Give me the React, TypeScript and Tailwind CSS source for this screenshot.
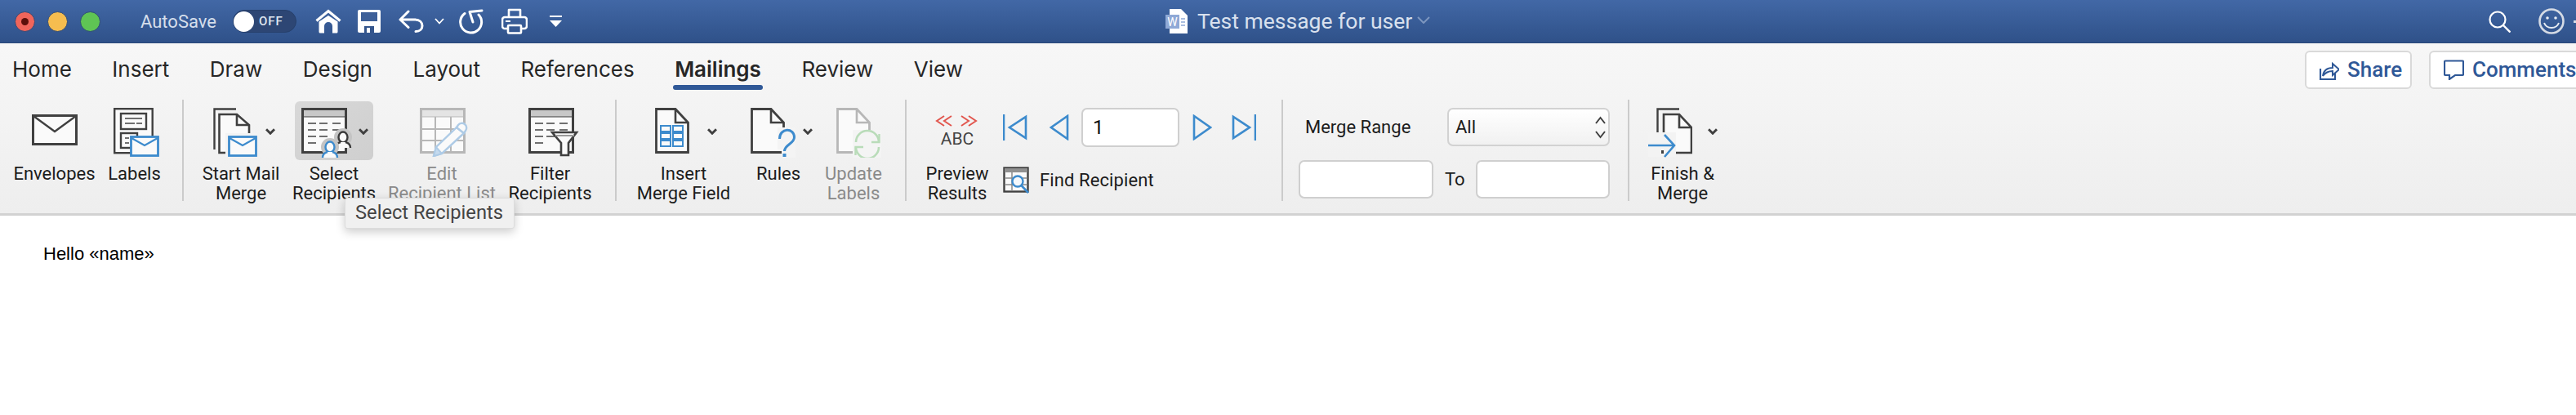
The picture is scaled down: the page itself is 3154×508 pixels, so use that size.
const DARK = "#404040";
const BLUE = "#3d8bcd";
const GREY = "#b7b7b7";

function Chevron({ color = DARK }: { color?: string }) {
  return (
    <svg width="12" height="8" viewBox="0 0 12 8" className="shrink-0">
      <path d="M1 1.2 6 6.2 11 1.2" fill="none" stroke={color} strokeWidth="3" />
    </svg>
  );
}

function Sep({ className }: { className: string }) {
  return <div className={`w-[2px] h-[124px] -mt-[2px] shrink-0 bg-[#cbcbcb] ${className}`} />;
}

function Dashes({ rows, color = "#707070" }: { rows: number[][]; color?: string }) {
  return (
    <>
      {rows.map(([x1, x2, y], i) => (
        <line key={i} x1={x1} x2={x2} y1={y} y2={y} stroke={color} strokeWidth="2" />
      ))}
    </>
  );
}

function MiniEnvelope({ x, y }: { x: number; y: number }) {
  return (
    <g transform={`translate(${x} ${y})`}>
      <rect x="1.5" y="1.5" width="33" height="23" fill="#fafafa" stroke={BLUE} strokeWidth="2.8" />
      <path d="M2 3 18 12 34 3" fill="none" stroke={BLUE} strokeWidth="2.2" />
    </g>
  );
}

function TableFrame({ color = DARK, head = "#c8c8c8" }: { color?: string; head?: string }) {
  return (
    <>
      <rect x="1.5" y="1.5" width="53" height="53" fill="#fafafa" stroke={color} strokeWidth="3" />
      <rect x="3" y="3" width="50" height="8" fill={head} />
      <line x1="2" x2="54" y1="11" y2="11" stroke={color} strokeWidth="1" />
    </>
  );
}

const tableRows = [
  [8, 18, 19], [22, 32, 19], [38, 48, 19],
  [8, 18, 27], [22, 32, 27], [38, 48, 27],
  [8, 18, 35], [22, 32, 35],
  [8, 18, 43],
];

function EnvelopeIcon() {
  return (
    <svg width="56" height="38" viewBox="0 0 56 38">
      <rect x="1.5" y="1.5" width="53" height="35" fill="#fafafa" stroke={DARK} strokeWidth="3" />
      <path d="M2 2 28 21 54 2" fill="none" stroke={DARK} strokeWidth="2.4" />
    </svg>
  );
}

function LabelsIcon() {
  return (
    <svg width="56" height="60" viewBox="0 0 56 60">
      <rect x="1.2" y="1.2" width="46.5" height="54" fill="#fafafa" stroke={DARK} strokeWidth="2.4" />
      <rect x="9" y="7" width="31" height="19" fill="none" stroke={DARK} strokeWidth="2.4" />
      <Dashes rows={[[14, 35, 13], [14, 26, 19], [28, 35, 19]]} />
      <rect x="9" y="31" width="20" height="18" fill="none" stroke={DARK} strokeWidth="2.4" />
      <Dashes rows={[[14, 19, 37], [14, 19, 43]]} />
      <MiniEnvelope x={20} y={34} />
    </svg>
  );
}

function StartMergeIcon() {
  return (
    <svg width="54" height="60" viewBox="0 0 54 60">
      <path d="M28 1.5H1.5V51" fill="none" stroke={DARK} strokeWidth="2.4" />
      <path d="M7.5 8H29L44 21V55H7.5Z" fill="#fafafa" stroke={DARK} strokeWidth="2.6" />
      <path d="M29 8V21H44" fill="none" stroke={DARK} strokeWidth="2.6" />
      <rect x="15" y="31" width="39" height="29" fill="#f4f4f4" />
      <MiniEnvelope x={18} y={34} />
    </svg>
  );
}

function Person({ x, y, color, r = 11 }: { x: number; y: number; color: string; r?: number }) {
  return (
    <g transform={`translate(${x} ${y})`}>
      <circle cx="0" cy="1" r={r} fill="#c4c4c4" />
      <ellipse cx="0" cy="1" rx="5.5" ry="6.5" fill="#fafafa" stroke={color} strokeWidth="2.4" />
      <path d="M-9 14c0-4 2-6 6-7h6c4 1 6 3 6 7Z" fill="#fafafa" />
      <path d="M-9 14c0-4 2-6 6-7M9 14c0-4-2-6-6-7" fill="none" stroke={color} strokeWidth="2.4" />
    </g>
  );
}

function SelectIcon() {
  return (
    <svg width="62" height="60" viewBox="0 0 62 60" className="overflow-visible">
      <TableFrame />
      <Dashes rows={tableRows} />
      <Person x={51} y={35} color="#3a3a3a" />
      <Person x={35} y={47} color={BLUE} />
    </svg>
  );
}

function EditIcon() {
  return (
    <svg width="60" height="60" viewBox="0 0 60 60">
      <TableFrame color={GREY} head="#e4e4e4" />
      <path d="M19 11V54M38 11V54M2 26H54M2 40H54" stroke={GREY} strokeWidth="2" />
      <path d="M45 24 54 31 27 56 17 59 20 48Z" fill="#fafafa" stroke="#aecbe6" strokeWidth="2.4" />
      <path d="M20 48 17 59 27 56Z" fill="#c5daee" stroke="#aecbe6" strokeWidth="2" />
      <path d="M47 21a4 4 0 0 1 9 7l-2 3-9-7Z" fill="#fafafa" stroke="#aecbe6" strokeWidth="2.4" />
    </svg>
  );
}

function FilterIcon() {
  return (
    <svg width="62" height="60" viewBox="0 0 62 60">
      <TableFrame />
      <Dashes rows={tableRows} />
      <path d="M29 30H59L49 43V58H40V43Z" fill="#fafafa" stroke={DARK} strokeWidth="2.6" />
      <path d="M33 34H56" stroke="#9a9a9a" strokeWidth="2" />
    </svg>
  );
}

function DocShape({ color = DARK }: { color?: string }) {
  return (
    <>
      <path d="M1.5 1.5H25L40.5 18V54.5H1.5Z" fill="#fafafa" stroke={color} strokeWidth="2.8" />
      <path d="M25 2V18H40" fill="none" stroke={color} strokeWidth="2.6" />
    </>
  );
}

function InsertFieldIcon() {
  const cells = [[7, 22], [22, 22], [7, 31], [22, 31], [7, 40], [22, 40]];
  return (
    <svg width="42" height="56" viewBox="0 0 42 56">
      <DocShape />
      {cells.map(([x, y], i) => (
        <rect key={i} x={x} y={y} width="12" height="7" fill="none" stroke={BLUE} strokeWidth="2" />
      ))}
    </svg>
  );
}

function RulesIcon() {
  return (
    <svg width="55" height="61" viewBox="0 0 55 61">
      <DocShape />
      <path d="M33 24H55V61H38V51H33Z" fill="#f4f4f4" />
      <path d="M35.5 38c0-14 18-14 18-2 0 8-12 9-12 17" fill="none" stroke={BLUE} strokeWidth="3" />
      <rect x="39.5" y="56" width="4" height="4" fill={BLUE} />
    </svg>
  );
}

function UpdateIcon() {
  return (
    <svg width="55" height="61" viewBox="0 0 55 61">
      <DocShape color={GREY} />
      <rect x="20" y="27" width="35" height="34" fill="#f4f4f4" />
      <path d="M24 42A14 14 0 0 1 52 42M24 48A14 14 0 0 0 52 48" fill="none" stroke="#b9dcb9" strokeWidth="2.6" />
      <path d="M52.5 32V42H43M23.5 58V48H33" fill="none" stroke="#b9dcb9" strokeWidth="2.4" />
    </svg>
  );
}

function RedChevrons() {
  return (
    <svg width="52" height="14" viewBox="0 0 52 14" className="block -ml-[3px]">
      <path d="M11 1 2 7 11 13M20 1 11 7 20 13M32 1 41 7 32 13M41 1 50 7 41 13" fill="none" stroke="#e2564e" strokeWidth="2" />
    </svg>
  );
}

function NavTriangle({ dir, bar }: { dir: "left" | "right"; bar?: boolean }) {
  return (
    <svg width={bar ? 30 : 24} height="32" viewBox={bar ? "0 0 30 32" : "0 0 24 32"} className="block shrink-0">
      {dir === "left" ? (
        <g fill="none" stroke={BLUE} strokeWidth="2.6">
          {bar && <line x1="1" x2="1" y1="0" y2="32" />}
          <path d={bar ? "M28 3V29L8 16Z" : "M22 2V30L2 16Z"} />
        </g>
      ) : (
        <g fill="none" stroke={BLUE} strokeWidth="2.6">
          {bar && <line x1="29" x2="29" y1="0" y2="32" />}
          <path d={bar ? "M2 3V29L22 16Z" : "M2 2V30L22 16Z"} />
        </g>
      )}
    </svg>
  );
}

function FindIcon() {
  return (
    <svg width="33" height="33" viewBox="0 0 33 33" className="block shrink-0">
      <rect x="1.5" y="1.5" width="29" height="29" fill="#fafafa" stroke={DARK} strokeWidth="2.4" />
      <rect x="2" y="2" width="28" height="5" fill="#909090" />
      <path d="M2 14H30M2 22H30M11 7V30" stroke="#8a8a8a" strokeWidth="1.5" />
      <circle cx="18" cy="18" r="6.5" fill="#f4f8fc" stroke={BLUE} strokeWidth="2.4" />
      <path d="M22.5 23 31 32" stroke={BLUE} strokeWidth="2.6" />
    </svg>
  );
}

function FinishIcon() {
  return (
    <svg width="54" height="62" viewBox="0 0 54 62">
      <path d="M38 1.5H11.5V33" fill="none" stroke={DARK} strokeWidth="2.4" />
      <path d="M19 8H38L53 24V55H19Z" fill="#fafafa" stroke={DARK} strokeWidth="2.6" />
      <path d="M38 8V24H53" fill="none" stroke={DARK} strokeWidth="2.6" />
      <rect x="0" y="30" width="34" height="30" fill="#f3f3f3" />
      <rect x="16" y="52" width="3" height="4" fill={DARK} />
      <path d="M0 46H32M20 33 32 46 20 60" fill="none" stroke={BLUE} strokeWidth="2.6" />
    </svg>
  );
}

function RibbonLabel({ lines, muted }: { lines: string[]; muted?: boolean }) {
  return (
    <div className={`mt-[5px] text-center text-[22px] leading-[24px] whitespace-nowrap ${muted ? "text-[#8a8a8a]" : "text-[#1c1c1c]"}`}>
      {lines.map((l) => (
        <div key={l}>{l}</div>
      ))}
    </div>
  );
}

const tabs = ["Home", "Insert", "Draw", "Design", "Layout", "References", "Mailings", "Review", "View"];

export default function App() {
  return (
    <div className="relative w-[3154px] h-[508px] overflow-hidden bg-white font-['Roboto',sans-serif]">
      {/* title bar */}
      <div className="h-[53px] flex items-center bg-gradient-to-b from-[#4268a6] to-[#2f5189] border-b border-[#2a4878] text-white">
        <div className="ml-[18px] w-[25px] h-[25px] rounded-full bg-[#f0655b] border border-[#2f4a78] flex items-center justify-center">
          <div className="w-[9px] h-[9px] rounded-full bg-[#5c0f0a]" />
        </div>
        <div className="ml-[15px] w-[25px] h-[25px] rounded-full bg-[#f6bd4f] border border-[#2f4a78]" />
        <div className="ml-[15px] w-[25px] h-[25px] rounded-full bg-[#5fc454] border border-[#2f4a78]" />
        <span className="ml-[49px] w-[113px] text-[22px] text-[#d5deeb]">AutoSave</span>
        <div className="w-[78px] h-[28px] rounded-full bg-[#2d4674] border border-[#26406c] flex items-center">
          <div className="w-[25px] h-[25px] rounded-full bg-white" />
          <span className="ml-[6px] text-[15px] font-medium tracking-[1px] text-[#dfe6f0]">OFF</span>
        </div>
        <svg width="32" height="30" viewBox="0 0 32 30" className="ml-[23px]">
          <path d="M1.5 14.5 16 2.5 30.5 14.5" fill="none" stroke="#fff" strokeWidth="3.2" />
          <path d="M4.5 15.5 16 8l11.5 7.5V28a1.5 1.5 0 0 1-1.5 1.5H21V21a5 5 0 0 0-10 0v8.5H6A1.5 1.5 0 0 1 4.5 28Z" fill="#fff" />
        </svg>
        <svg width="28" height="28" viewBox="0 0 28 28" className="ml-[20px]">
          <path d="M2 0H26a2 2 0 0 1 2 2V26a2 2 0 0 1-2 2H2a2 2 0 0 1-2-2V2a2 2 0 0 1 2-2Z" fill="#fff" />
          <rect x="4" y="3" width="20" height="11" fill="#3d5f98" />
          <rect x="8" y="20" width="12" height="8" fill="#34558c" />
          <rect x="11" y="22" width="4" height="6" fill="#fff" />
        </svg>
        <svg width="32" height="28" viewBox="0 0 32 28" className="ml-[22px]">
          <path d="M12 2 2 12 12 21.5M3 12H20c6 0 9 3.5 9 7.5s-3 7-8 7" fill="none" stroke="#fff" strokeWidth="3" strokeLinecap="round" strokeLinejoin="round" />
        </svg>
        <svg width="12" height="8" viewBox="0 0 12 8" className="ml-[12px]">
          <path d="M1 1 6 6.5 11 1" fill="none" stroke="#fff" strokeWidth="1.8" />
        </svg>
        <svg width="31" height="31" viewBox="0 0 31 31" className="ml-[18px]">
          <path d="M7 5.5A13 13 0 1 0 24 7" fill="none" stroke="#fff" strokeWidth="3" strokeLinecap="round" />
          <path d="M28 2 13 3.5 17 16" fill="none" stroke="#fff" strokeWidth="3" strokeLinejoin="round" strokeLinecap="round" />
        </svg>
        <svg width="32" height="32" viewBox="0 0 32 32" className="ml-[21px]">
          <path d="M9 11V2H23V11" fill="none" stroke="#fff" strokeWidth="2.6" strokeLinejoin="round" />
          <path d="M8 25H4a3 3 0 0 1-3-3V14a3 3 0 0 1 3-3H28a3 3 0 0 1 3 3V22a3 3 0 0 1-3 3H24" fill="none" stroke="#fff" strokeWidth="2.6" />
          <rect x="8" y="21" width="16" height="9.5" rx="1" fill="none" stroke="#fff" strokeWidth="2.6" />
          <rect x="5" y="15" width="6" height="2" fill="#fff" />
        </svg>
        <svg width="15" height="15" viewBox="0 0 15 15" className="ml-[27px]">
          <rect x="0" y="0" width="15" height="2" fill="#fff" />
          <path d="M0 6H15L7.5 14Z" fill="#fff" />
        </svg>
        <svg width="27" height="30" viewBox="0 0 27 30" className="ml-[739px]">
          <path d="M5 0H19L27 8V30H5Z" fill="#fff" />
          <rect x="0" y="7" width="17" height="17" fill="#8fa9d6" />
          <text x="8.5" y="21" textAnchor="middle" fontSize="14" fill="#fff">W</text>
          <path d="M19 12H24M19 16H24M19 20H24" stroke="#8fa9d6" strokeWidth="1.5" />
        </svg>
        <span className="ml-[12px] text-[26.5px] text-[#d9e1ee]">Test message for user</span>
        <svg width="16" height="9" viewBox="0 0 16 9" className="ml-[6px] -mt-[4px]">
          <path d="M1 1 8 8 15 1" fill="none" stroke="#7d96bf" strokeWidth="2" />
        </svg>
        <div className="ml-auto flex items-center">
          <svg width="27" height="27" viewBox="0 0 27 27">
            <circle cx="11" cy="11" r="9.5" fill="none" stroke="#fff" strokeWidth="2.2" />
            <path d="M18 18 26.5 26.5" stroke="#fff" strokeWidth="2.4" />
          </svg>
          <svg width="32" height="32" viewBox="0 0 32 32" className="ml-[34px]">
            <circle cx="16" cy="16" r="14.5" fill="none" stroke="#d5dbe5" strokeWidth="2.6" />
            <circle cx="11" cy="12" r="1.8" fill="#e6ebf2" />
            <circle cx="21" cy="12" r="1.8" fill="#e6ebf2" />
            <path d="M7 18c3 8 15 8 18 0" fill="none" stroke="#e6ebf2" strokeWidth="2" />
          </svg>
          <div className="ml-[11px] w-[3px] h-[3px] bg-[#d5dbe5]" />
        </div>
      </div>

      {/* ribbon */}
      <div className="h-[211px] bg-gradient-to-b from-[#f7f7f7] to-[#eeeeee] border-b-[3px] border-[#d2d2d2]">
        <div className="h-[71px] flex items-start">
          <div className="w-[2822px] shrink-0 flex pl-[15px] pt-[16px] gap-[49.5px] font-['Inter',sans-serif]">
            {tabs.map((t) => (
              <div key={t} className="flex flex-col">
                <span className={`text-[26px] leading-[32px] text-[#262626] whitespace-nowrap ${t === "Mailings" ? "font-semibold" : ""}`}>{t}</span>
                {t === "Mailings" && <div className="h-[6px] mt-[3px] -mx-[2px] rounded-full bg-[#2f5897]" />}
              </div>
            ))}
          </div>
          <div className="pt-[9px] flex gap-[21px] shrink-0">
            <div className="w-[131px] h-[47px] flex items-center bg-white border-2 border-[#d9d9d9] rounded-[6px] text-[#2f5897] text-[26px] font-medium">
              <svg width="24" height="24" viewBox="0 0 24 24" className="ml-[16px]">
                <path d="M1 10V23H19V16" fill="none" stroke="currentColor" strokeWidth="2.2" />
                <path d="M4 19c1-7 6-10 12-10V4l8 7-8 7v-5c-5 0-9 2-12 6Z" fill="none" stroke="currentColor" strokeWidth="2" />
              </svg>
              <span className="ml-[10px]">Share</span>
            </div>
            <div className="w-[220px] h-[47px] shrink-0 flex items-center bg-white border-2 border-[#d9d9d9] rounded-[6px] text-[#2f5897] text-[26px] font-medium">
              <svg width="25" height="25" viewBox="0 0 25 25" className="ml-[16px]">
                <path d="M2 1.5H23a1 1 0 0 1 1 1V18a1 1 0 0 1-1 1H14L7 24V19H2a1 1 0 0 1-1-1V2.5a1 1 0 0 1 1-1Z" fill="none" stroke="currentColor" strokeWidth="2.2" />
              </svg>
              <span className="ml-[10px]">Comments</span>
            </div>
          </div>
        </div>

        <div className="flex items-start">
          <div className="ml-[16px] w-[101px] shrink-0">
            <div className="h-[72px] flex justify-center pt-[16px]"><EnvelopeIcon /></div>
            <RibbonLabel lines={["Envelopes"]} />
          </div>
          <div className="ml-[15px] w-[65px] shrink-0">
            <div className="h-[72px] pt-[8px]"><div className="ml-[7px]"><LabelsIcon /></div></div>
            <RibbonLabel lines={["Labels"]} />
          </div>
          <Sep className="ml-[26px]" />

          <div className="ml-[20px] w-[100px] shrink-0">
            <div className="h-[72px] flex items-start pl-[16px] pt-[8px]">
              <StartMergeIcon />
              <div className="ml-[10px] mt-[25px]"><Chevron /></div>
            </div>
            <RibbonLabel lines={["Start Mail", "Merge"]} />
          </div>
          <div className="ml-[13px] w-[102px] shrink-0">
            <div className="ml-[3px] w-[96px] h-[72px] rounded-[6px] bg-gradient-to-br from-[#d8d8d8] to-[#cfcfcf] flex items-start pl-[8px] pt-[8px]">
              <SelectIcon />
              <div className="ml-[8px] mt-[25px]"><Chevron /></div>
            </div>
            <RibbonLabel lines={["Select", "Recipients"]} />
          </div>
          <div className="ml-[14px] w-[134px] shrink-0">
            <div className="h-[72px] pl-[40px] pt-[8px]"><EditIcon /></div>
            <RibbonLabel lines={["Edit", "Recipient List"]} muted />
          </div>
          <div className="ml-[13px] w-[105px] shrink-0">
            <div className="h-[72px] pl-[26px] pt-[8px]"><FilterIcon /></div>
            <RibbonLabel lines={["Filter", "Recipients"]} />
          </div>
          <Sep className="ml-[27px]" />

          <div className="ml-[21px] w-[122px] shrink-0">
            <div className="h-[72px] flex items-start pl-[26px] pt-[8px]">
              <InsertFieldIcon />
              <div className="ml-[22px] mt-[25px]"><Chevron /></div>
            </div>
            <RibbonLabel lines={["Insert", "Merge Field"]} />
          </div>
          <div className="ml-[13px] w-[84px] shrink-0">
            <div className="h-[72px] flex items-start pl-[8px] pt-[8px]">
              <RulesIcon />
              <div className="ml-[9px] mt-[25px]"><Chevron /></div>
            </div>
            <RibbonLabel lines={["Rules"]} />
          </div>
          <div className="ml-[10px] w-[80px] shrink-0">
            <div className="h-[72px] pl-[19px] pt-[8px]"><UpdateIcon /></div>
            <RibbonLabel lines={["Update", "Labels"]} muted />
          </div>
          <Sep className="ml-[23px]" />

          <div className="ml-[20px] w-[84px] shrink-0">
            <div className="h-[72px] flex flex-col items-center pt-[17px]">
              <RedChevrons />
              <span className="text-[21px] leading-[22px] mt-[4px] text-[#444444]">ABC</span>
            </div>
            <RibbonLabel lines={["Preview", "Results"]} />
          </div>
          <div className="ml-[14px] shrink-0 flex flex-col">
            <div className="mt-[8px] h-[48px] flex items-center">
              <NavTriangle dir="left" bar />
              <div className="ml-[27px]"><NavTriangle dir="left" /></div>
              <div className="ml-[15px] w-[120px] h-[48px] bg-white border-2 border-[#cfcfcf] rounded-[7px] flex items-center pl-[12px] text-[24px] text-[#111111]">1</div>
              <div className="ml-[16px]"><NavTriangle dir="right" /></div>
              <div className="ml-[24px]"><NavTriangle dir="right" bar /></div>
            </div>
            <div className="mt-[24px] flex items-center">
              <FindIcon />
              <span className="ml-[12px] text-[22px] tracking-[0.1px] text-[#1c1c1c] whitespace-nowrap">Find Recipient</span>
            </div>
          </div>
          <Sep className="ml-[31px]" />

          <div className="ml-[19px] w-[381px] shrink-0 flex flex-col">
            <div className="mt-[8px] h-[47px] flex items-center">
              <span className="ml-[8px] text-[22px] text-[#1c1c1c]">Merge Range</span>
              <div className="ml-auto w-[199px] h-[47px] bg-gradient-to-b from-white to-[#f1f1f1] border-2 border-[#d2d2d2] rounded-[7px] flex items-center pl-[8px] text-[22px] text-[#1c1c1c]">
                All
                <svg width="13" height="28" viewBox="0 0 13 28" className="ml-auto mr-[3px]">
                  <path d="M1 9 6.5 2 12 9M1 19 6.5 26 12 19" fill="none" stroke={DARK} strokeWidth="2" />
                </svg>
              </div>
            </div>
            <div className="mt-[17px] flex items-center">
              <div className="w-[165px] h-[47px] bg-white border-2 border-[#cfcfcf] rounded-[7px]" />
              <span className="ml-[14px] text-[22px] text-[#1c1c1c]">To</span>
              <div className="ml-auto w-[164px] h-[47px] bg-white border-2 border-[#cfcfcf] rounded-[7px]" />
            </div>
          </div>
          <Sep className="ml-[22px]" />

          <div className="ml-[20px] w-[90px] shrink-0">
            <div className="h-[72px] flex items-start pl-[3px] pt-[8px]">
              <FinishIcon />
              <div className="ml-[19px] mt-[25px]"><Chevron /></div>
            </div>
            <RibbonLabel lines={["Finish &", "Merge"]} />
          </div>
        </div>
      </div>

      {/* document */}
      <div className="pl-[53px] pt-[34px] text-[22px] leading-[26px] text-black font-['Liberation_Sans',sans-serif]">Hello «name»</div>

      {/* tooltip */}
      <div className="absolute left-[422px] top-[242px] w-[208px] h-[38px] bg-[#f0f0f0] border border-[#dcdcdc] rounded-[3px] shadow-[0_4px_12px_rgba(0,0,0,0.2)] flex items-center pl-[12px] text-[23.7px] text-[#444444] whitespace-nowrap">
        Select Recipients
      </div>
    </div>
  );
}
